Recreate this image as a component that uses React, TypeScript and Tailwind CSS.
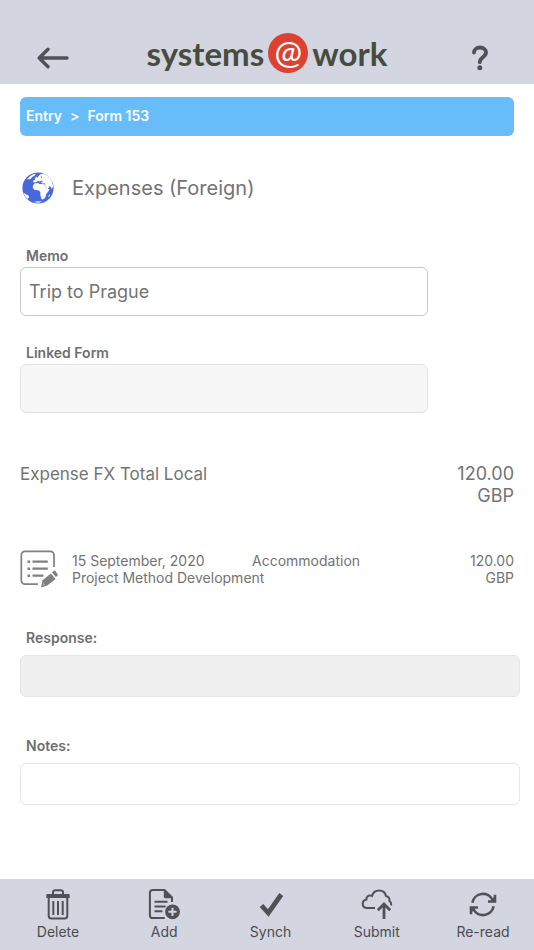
import React from 'react';

const BackIcon = () => (
  <svg width="32" height="22" viewBox="0 0 32 22" fill="none" stroke="#505157" strokeWidth="3.4" strokeLinecap="round" strokeLinejoin="round" aria-hidden="true">
    <path d="M30 11H2.5M11 2.300L2.200 11l8.800 8.700" />
  </svg>
);

const HelpIcon = () => (
  <svg width="18" height="26" viewBox="0 0 18 26" fill="none" aria-hidden="true">
    <path d="M3 7.600C3 4.500 5.500 2.500 9 2.500s6 2 6 5c0 4.800-6.200 4.800-6.200 9.700" stroke="#505157" strokeWidth="3.800" strokeLinecap="round" />
    <circle cx="8.800" cy="22.700" r="2.500" fill="#505157" />
  </svg>
);

const GlobeIcon = () => (
  <svg width="32" height="32" viewBox="0 0 32 32" aria-hidden="true">
    <circle cx="16" cy="16" r="15.600" fill="#4769db" />
    <g fill="#fff">
      <path d="M12.500 11.500l3.500-.6 1.800 1.100 2.700.1 2.200.4 1.600 3.300 1 1.300 2.200-.2-1 2.300-2.300 2.700-.4 2.400-1.500 2.400-1.800.9-1-.5-.8-2.600-.5-2.300.2-1.800-1.300-2-2.200-.4-2.200-.1-1.800-1.900-.1-2z" />
      <path d="M11.200 10.600l.2-2.300 1.800-.5-.5-1.300 1.600-1.700 1.200 1 1-1.700 1.900-1.900 3.100-.4 3 1.200 3 2.600 2.200 3.200 1.200 3.700.1 2.200-1.400 2.300-1-2.300-1.300-.7-.3 1.600-1.600 1.700-1.500-2.600-.8-2-.4-1.400-2.600.1-.8-1.200-1.800-.2-1-.9-1.600.3-1.300 1.100z" />
      <path d="M5 7.300l2.900-3 3-1.800 3-.7-1.300 1.900-2.600 1.300-1.200 1.900-1.900.3z" />
      <path d="M1.300 20.700l2.400 1.200 3 1.900.2 1.800-1.200 1.300-2.400-2.500z" />
      <path d="M26.600 23.600l1.100-1.600.1 1.700-1.200 1.900zM11.500 30l4.500-.7 4.600.4-4.600 1.100z" />
    </g>
    <path d="M16.600 9.300l3.200-.5 1.800.8-2.700.5zM18.700 5.800l.6-1.600.7.3-.4 1.700z" fill="#4769db" />
  </svg>
);

const EntryIcon = () => (
  <svg width="38" height="38" viewBox="0 0 38 38" fill="none" aria-hidden="true">
    <path d="M34 17V5a3.700 3.700 0 0 0-3.700-3.700H5A3.700 3.700 0 0 0 1.300 5v25.500a3.700 3.700 0 0 0 3.700 3.700h13" stroke="#808080" strokeWidth="1.700" />
    <path d="M12.500 11.700h15.300M12.500 18.700h15.300M12.500 25.700h11" stroke="#808080" strokeWidth="2.200" />
    <path d="M7.500 11.700h2.600M7.500 18.700h2.600M7.500 25.700h2.600" stroke="#808080" strokeWidth="2.400" />
    <path d="M21 37.500l1.600-7.200 8.200-6.800 4.800 5.600-8.300 6.400z" fill="#808080" />
    <path d="M32 22.400l1.600-1.300c.6-.5 1.400-.4 1.900.2l2 2.600c.5.600.4 1.400-.2 1.900l-1.400 1.100z" fill="#808080" />
    <path d="M22.900 33.500l1.700 1.300" stroke="#fff" strokeWidth="0.800" />
  </svg>
);

const DeleteIcon = () => (
  <svg width="32" height="32" viewBox="0 0 32 32" fill="none" stroke="#505157" aria-hidden="true">
    <path d="M11 6V4.200C11 2.900 11.900 2.200 13.200 2.200h5.600c1.300 0 2.200.7 2.200 2V6" strokeWidth="2" />
    <path d="M4.300 10V7.200c0-.8.5-1.300 1.300-1.300h20.800c.8 0 1.300.5 1.300 1.300V10z" fill="#505157" stroke="none" />
    <path d="M6.700 9.500v18.300c0 1.600 1 2.600 2.600 2.600h13.400c1.600 0 2.600-1 2.600-2.600V9.500" strokeWidth="2" />
    <path d="M11.300 13v14M16 13v14M20.700 13v14" strokeWidth="2" />
  </svg>
);

const AddIcon = () => (
  <svg width="32" height="32" viewBox="0 0 32 32" fill="none" stroke="#505157" aria-hidden="true">
    <path d="M24 14V9.500L16.500 1.900H4.800C3 1.900 1.900 3 1.900 4.800v22.400c0 1.800 1.100 2.900 2.900 2.900h12" strokeWidth="2" />
    <path d="M15.800 1.200v7.600c0 .9.500 1.400 1.400 1.400H25z" fill="#505157" stroke="none" />
    <path d="M6.500 13.700h13M6.500 18.500h11M6.500 23.300h8" strokeWidth="2" />
    <circle cx="24.500" cy="23.800" r="7.400" fill="#505157" stroke="none" />
    <path d="M24.500 19.700v8.200M20.400 23.800h8.200" stroke="#d3d5e1" strokeWidth="2" />
  </svg>
);

const SynchIcon = () => (
  <svg width="32" height="32" viewBox="0 0 32 32" fill="none" aria-hidden="true">
    <path d="M6.500 17.500l6.800 7.500L26.300 6.500" stroke="#505157" strokeWidth="4.800" />
  </svg>
);

const SubmitIcon = () => (
  <svg width="32" height="32" viewBox="0 0 32 32" fill="none" stroke="#505157" aria-hidden="true">
    <path d="M14 20H6.300C3.500 20 1.700 18.300 1.700 15.800c0-2.300 1.500-3.800 3.700-4.200-.2-2.400 1.400-4.300 3.900-4.200.7 0 1.200.2 1.700.5C11.900 4.700 14.500 2.500 18 2.500c3.700 0 6.300 2 7 5.500 2.600.5 3.900 2.500 3.400 5 1.600 1.200 2.200 2.600 1.500 4.300" strokeWidth="2" />
    <path d="M23 31V16.500M16.800 22.300l6.200-6.200 6.200 6.200" strokeWidth="2.800" />
  </svg>
);

const RereadIcon = () => (
  <svg width="32" height="32" viewBox="0 0 32 32" fill="none" stroke="#505157" strokeWidth="2.600" aria-hidden="true">
    <path d="M5.400 14.700A10.700 10.700 0 0 1 25.600 12M26.600 18.300A10.700 10.700 0 0 1 6.400 21" />
    <path d="M28 6.700v6.800h-7M4 26.300v-6.800h7" />
    <path d="M28 10l-3 3M4 23l3-3" />
  </svg>
);

const actions = [
  { label: 'Delete', icon: DeleteIcon },
  { label: 'Add', icon: AddIcon },
  { label: 'Synch', icon: SynchIcon },
  { label: 'Submit', icon: SubmitIcon },
  { label: 'Re-read', icon: RereadIcon },
];

const labelClass = 'block px-1.5 text-sm leading-5 font-semibold text-[#6e6e6e]';

export default function App() {
  return (
    <div className="flex min-h-screen flex-col bg-white font-['Inter',sans-serif] text-[#737373]">
      <header className="grid grid-cols-[1fr_auto_1fr] items-center bg-[#d3d5e1] px-[37px] pt-[33px] pb-[11px]">
        <button type="button" aria-label="Back" className="justify-self-start pt-2.5">
          <BackIcon />
        </button>
        <div className="flex items-center gap-1 font-['Lato',sans-serif] text-[33px] leading-10 font-bold text-[#474c3d]">
          <span>systems</span>
          <span className="flex size-10 items-center justify-center rounded-full bg-[#dd4132] pb-1 text-[33px] font-normal text-white">@</span>
          <span>work</span>
        </div>
        <button type="button" aria-label="Help" className="justify-self-end pt-2.5 pr-2">
          <HelpIcon />
        </button>
      </header>

      <main className="flex-1 pt-[13px] pr-5 pb-8 pl-5">
        <nav aria-label="Breadcrumb" className="flex gap-2 rounded-md bg-[#67bcfa] px-1.5 pt-[9px] pb-2.5 text-sm leading-5 font-semibold text-white">
          <a href="#entry">Entry</a>
          <span>&gt;</span>
          <a href="#form-153">Form 153</a>
        </nav>

        <div className="mt-9 flex items-center gap-[18px] pl-0.5">
          <GlobeIcon />
          <h1 className="text-xl leading-8">Expenses (Foreign)</h1>
        </div>

        <div className="mt-[42px] mr-[86px]">
          <label htmlFor="memo" className={labelClass}>Memo</label>
          <input
            id="memo"
            type="text"
            defaultValue="Trip to Prague"
            className="mt-px block h-[49px] w-full rounded-md border border-[#c8c8c8] bg-white px-2 text-lg"
          />
        </div>

        <div className="mt-[27px] mr-[86px]">
          <label htmlFor="linked-form" className={labelClass}>Linked Form</label>
          <input
            id="linked-form"
            type="text"
            readOnly
            className="mt-px block h-[49px] w-full rounded-md border border-[#e2e2e2] bg-[#f7f7f7] px-2 text-lg"
          />
        </div>

        <div className="mt-[50px] flex justify-between text-lg leading-[22px]">
          <p className="text-[17px]">Expense FX Total Local</p>
          <p className="text-right">120.00<br />GBP</p>
        </div>

        <a href="#line-1" className="mt-[43px] flex text-sm leading-[17px]">
          <span className="w-[52px] shrink-0">
            <EntryIcon />
          </span>
          <span className="flex-1 pt-0.5">
            <span className="flex">
              <span className="w-[180px]">15 September, 2020</span>
              <span>Accommodation</span>
            </span>
            <span className="block">Project Method Development</span>
          </span>
          <span className="pt-0.5 text-right">120.00<br />GBP</span>
        </a>

        <div className="mt-10 -mr-1.5">
          <label htmlFor="response" className={labelClass}>Response:</label>
          <input
            id="response"
            type="text"
            readOnly
            className="mt-[7px] block h-[42px] w-full rounded-md border border-[#e6e6e6] bg-[#f0f0f0] px-2 text-lg"
          />
        </div>

        <div className="mt-[39px] -mr-1.5">
          <label htmlFor="notes" className={labelClass}>Notes:</label>
          <input
            id="notes"
            type="text"
            className="mt-[7px] block h-[42px] w-full rounded-md border border-[#e6e6e6] bg-white px-2 text-lg"
          />
        </div>
      </main>

      <footer className="flex justify-between bg-[#d3d5e1] pt-[9px] pr-[11px] pb-2 pl-[18px]">
        {actions.map(action => (
          <button key={action.label} type="button" className="flex w-20 flex-col items-center gap-0.5 text-sm leading-5 text-[#4b4c50]">
            <action.icon />
            {action.label}
          </button>
        ))}
      </footer>
    </div>
  );
}
